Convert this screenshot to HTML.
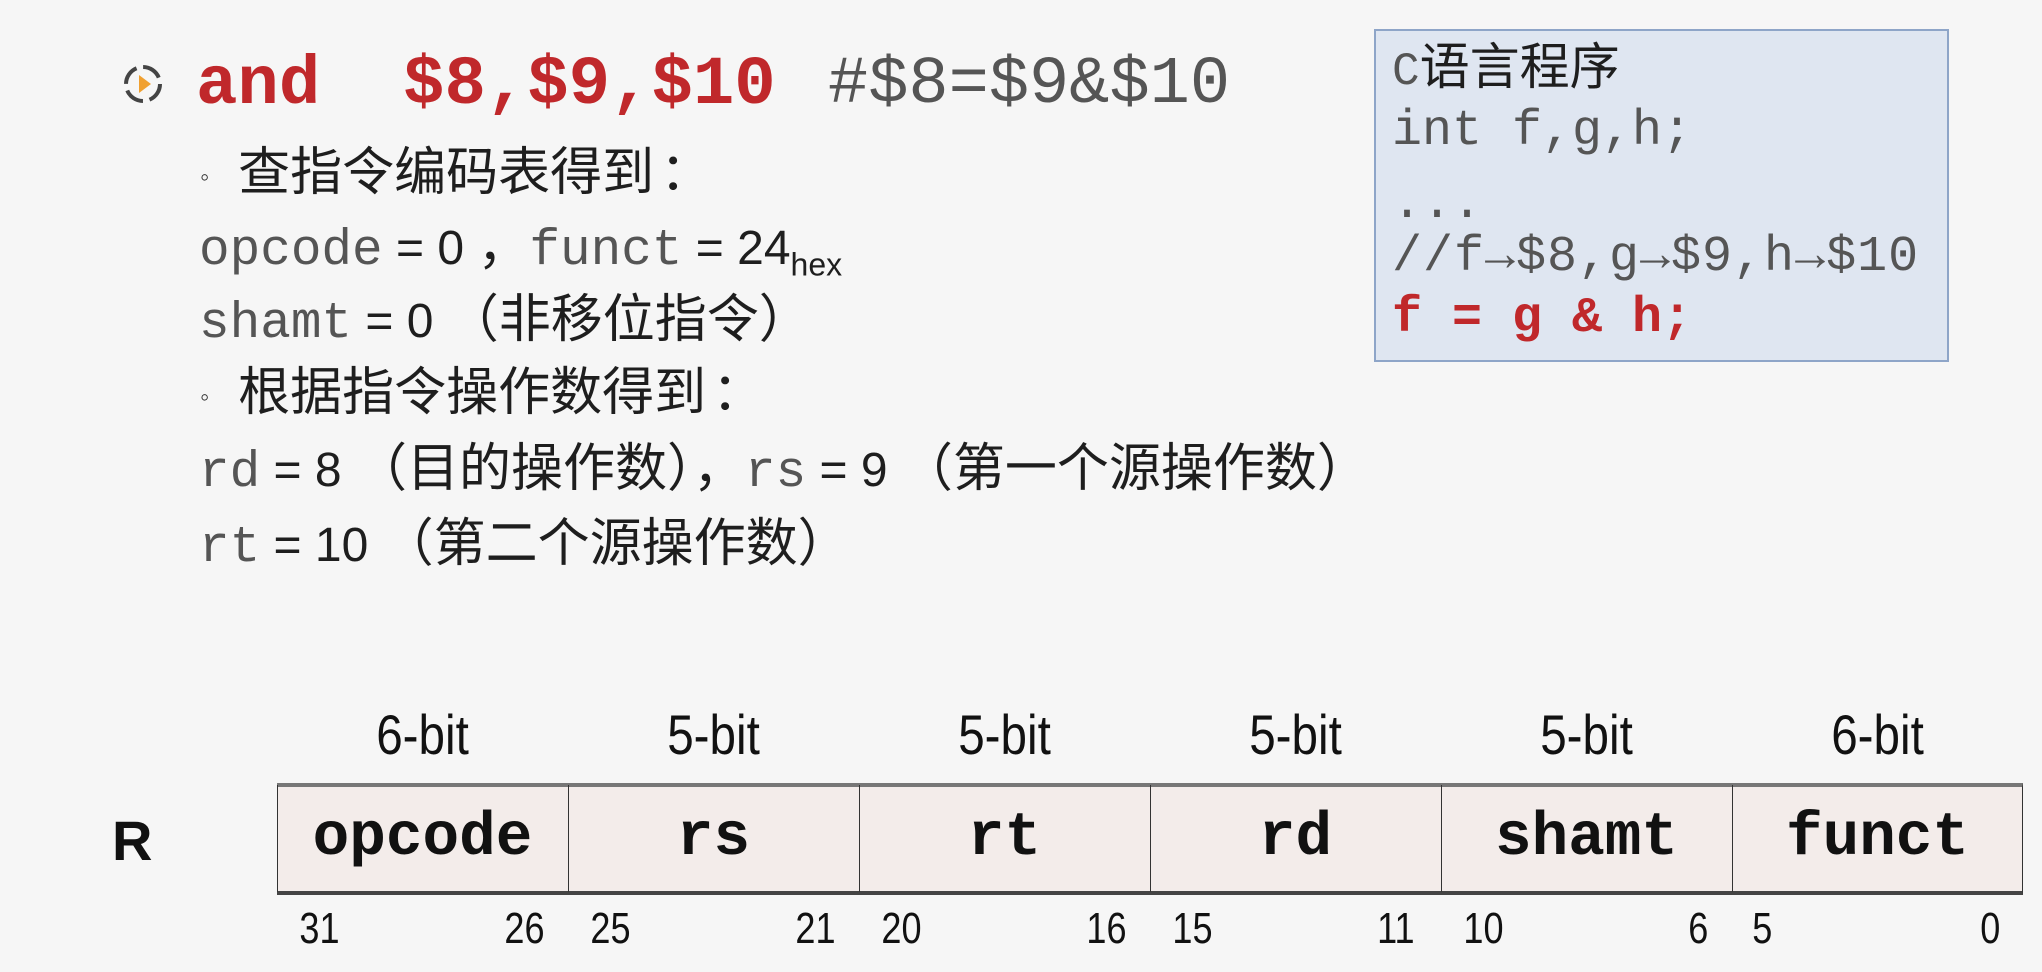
<!DOCTYPE html>
<html><head><meta charset="utf-8"><style>
body{margin:0;width:2042px;height:972px;background:#f6f6f6;position:relative;overflow:hidden;font-family:"Liberation Sans","Noto Sans CJK SC",sans-serif;}
.a{position:absolute;white-space:nowrap;}
.m{font-family:"Liberation Mono","Noto Sans CJK SC",monospace;}
.g{color:#555;}
.ln{font-size:52px;line-height:60px;color:#1e1e1e;}
.ln .m{font-size:51px;color:#555;}
.ln .n{font-size:48px;}
.ln .p{margin:0 6px;}
.cell{position:absolute;top:785px;height:107px;width:290px;border-left:1.5px solid #333;box-sizing:border-box;text-align:center;line-height:107px;font-family:"Liberation Mono",monospace;font-weight:bold;font-size:61px;color:#111;}
.bit{position:absolute;top:702px;width:291px;text-align:center;font-size:56px;color:#111;transform:scaleX(0.85);}
.num{position:absolute;top:904px;font-size:44px;color:#111;transform:scaleX(0.82);}
</style></head><body>
<svg class="a" style="left:121px;top:62px" width="44" height="44" viewBox="0 0 44 44">
<circle cx="22" cy="22" r="17" fill="none" stroke="#444" stroke-width="4" stroke-dasharray="20 6.7"/>
<path d="M18 13 L30 22 L18 31 Z" fill="#f0a030"/>
</svg>
<div class="a m" style="left:196px;top:50px;font-size:69px;line-height:70px;font-weight:bold;color:#c0282b">and&nbsp;&nbsp;$8,$9,$10</div>
<div class="a m" style="left:828px;top:50px;font-size:67px;line-height:70px;color:#555">#$8=$9&amp;$10</div>

<div class="a ln" style="left:200px;top:143px"><span style="font-size:26px;vertical-align:middle;color:#333">◦</span>&nbsp;&nbsp;查指令编码表得到<span class="p">：</span></div>
<div class="a ln" style="left:199px;top:217px"><span class="m">opcode</span><span class="n"> = 0 </span>，<span class="m">funct</span><span class="n"> = 24</span><sub style="font-size:32px">hex</sub></div>
<div class="a ln" style="left:199px;top:290px"><span class="m">shamt</span><span class="n"> = 0 </span>（非移位指令）</div>
<div class="a ln" style="left:200px;top:363px"><span style="font-size:26px;vertical-align:middle;color:#333">◦</span>&nbsp;&nbsp;根据指令操作数得到<span class="p">：</span></div>
<div class="a ln" style="left:199px;top:439px"><span class="m">rd</span><span class="n"> = 8 </span>（目的操作数），<span class="m">rs</span><span class="n"> = 9 </span>（第一个源操作数）</div>
<div class="a ln" style="left:199px;top:514px"><span class="m">rt</span><span class="n"> = 10 </span>（第二个源操作数）</div>

<div class="a" style="left:1374px;top:29px;width:575px;height:333px;background:#dfe6f1;border:2px solid #8ea5c8;box-sizing:border-box"></div>
<div class="a" style="left:1392px;top:39px;font-size:50px;line-height:56px;color:#1e1e1e"><span class="m" style="color:#555;font-size:46px">C</span>语言程序</div>
<div class="a m g" style="left:1392px;top:104px;font-size:50px;line-height:56px">int f,g,h;</div>
<div class="a m g" style="left:1392px;top:177px;font-size:50px;line-height:56px">...</div>
<div class="a m g" style="left:1392px;top:230px;font-size:50px;line-height:56px;letter-spacing:1px">//f→$8,g→$9,h→$10</div>
<div class="a m" style="left:1392px;top:291px;font-size:50px;line-height:56px;font-weight:bold;color:#c0282b">f = g &amp; h;</div>

<div class="bit" style="left:277px">6-bit</div>
<div class="bit" style="left:568px">5-bit</div>
<div class="bit" style="left:859px">5-bit</div>
<div class="bit" style="left:1150px">5-bit</div>
<div class="bit" style="left:1441px">5-bit</div>
<div class="bit" style="left:1732px">6-bit</div>

<div class="a" style="left:112px;top:808px;font-size:56px;font-weight:bold;color:#111">R</div>
<div class="a" style="left:277px;top:783px;width:1746px;height:112px;background:#f3ecea;border-top:4px solid #777;border-bottom:4px solid #444;box-sizing:border-box;border-right:1.5px solid #333"></div>
<div class="cell" style="left:277px">opcode</div>
<div class="cell" style="left:568px">rs</div>
<div class="cell" style="left:859px">rt</div>
<div class="cell" style="left:1150px">rd</div>
<div class="cell" style="left:1441px">shamt</div>
<div class="cell" style="left:1732px">funct</div>

<div class="num" style="left:295px">31</div><div class="num" style="left:500px">26</div>
<div class="num" style="left:586px">25</div><div class="num" style="left:791px">21</div>
<div class="num" style="left:877px">20</div><div class="num" style="left:1082px">16</div>
<div class="num" style="left:1168px">15</div><div class="num" style="left:1373px">11</div>
<div class="num" style="left:1459px">10</div><div class="num" style="left:1686px">6</div>
<div class="num" style="left:1750px">5</div><div class="num" style="left:1978px">0</div>
</body></html>
